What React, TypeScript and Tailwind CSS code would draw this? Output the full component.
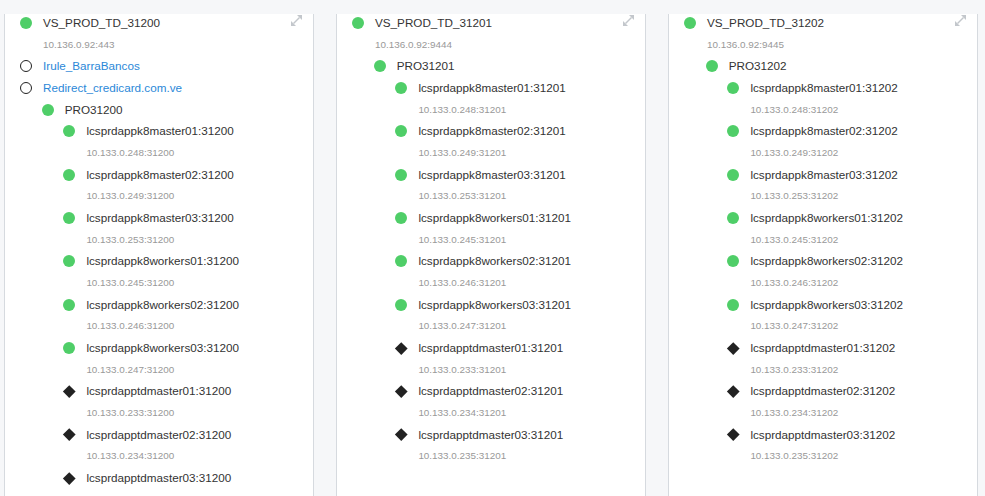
import React from "react";

type Kind = "ok" | "off" | "ext";
type Node = { name: string; ip?: string; kind: Kind; link?: boolean; children?: Node[] };

const hosts = [
  ["lcsprdappk8master01", "248", "ok"],
  ["lcsprdappk8master02", "249", "ok"],
  ["lcsprdappk8master03", "253", "ok"],
  ["lcsprdappk8workers01", "245", "ok"],
  ["lcsprdappk8workers02", "246", "ok"],
  ["lcsprdappk8workers03", "247", "ok"],
  ["lcsprdapptdmaster01", "233", "ext"],
  ["lcsprdapptdmaster02", "234", "ext"],
  ["lcsprdapptdmaster03", "235", "ext"],
] as const;

const members = (port: string): Node[] =>
  hosts.map(([h, o, k]) => ({ name: `${h}:${port}`, ip: `10.133.0.${o}:${port}`, kind: k as Kind }));

const trees: Node[] = [
  {
    name: "VS_PROD_TD_31200",
    ip: "10.136.0.92:443",
    kind: "ok",
    children: [
      { name: "Irule_BarraBancos", kind: "off", link: true },
      { name: "Redirect_credicard.com.ve", kind: "off", link: true },
      { name: "PRO31200", kind: "ok", children: members("31200") },
    ],
  },
  {
    name: "VS_PROD_TD_31201",
    ip: "10.136.0.92:9444",
    kind: "ok",
    children: [{ name: "PRO31201", kind: "ok", children: members("31201") }],
  },
  {
    name: "VS_PROD_TD_31202",
    ip: "10.136.0.92:9445",
    kind: "ok",
    children: [{ name: "PRO31202", kind: "ok", children: members("31202") }],
  },
];

function Icon({ kind }: { kind: Kind }) {
  if (kind === "ok") return <span className="block w-[12px] h-[12px] rounded-full bg-[#4fce68]" />;
  if (kind === "off")
    return <span className="block w-[12px] h-[12px] rounded-full border-[1.4px] border-[#222]" />;
  return (
    <span className="flex w-[12px] h-[12px] items-center justify-center">
      <span className="block w-[8.5px] h-[8.5px] bg-[#222] rotate-45" />
    </span>
  );
}

function Tree({ node }: { node: Node }) {
  return (
    <div>
      <div className="flex items-center h-[21.67px]">
        <Icon kind={node.kind} />
        <span
          className={`ml-[11px] text-[11.7px] leading-none whitespace-nowrap ${
            node.link ? "text-[#2b88d8]" : "text-[#333]"
          }`}
        >
          {node.name}
        </span>
      </div>
      {node.ip && (
        <div className="flex items-center h-[21.67px] pl-[23px] text-[9.9px] leading-none text-[#999] whitespace-nowrap">
          {node.ip}
        </div>
      )}
      {node.children && (
        <div>
          {node.children.map((c, i) => (
            <div key={i} className={c.link ? "" : "pl-[21.7px]"}>
              <Tree node={c} />
            </div>
          ))}
        </div>
      )}
    </div>
  );
}

function Expand() {
  return (
    <svg width="11" height="11" viewBox="0 0 11 11" className="absolute top-[1px] right-[11px]">
      <line x1="2.5" y1="8.5" x2="8.5" y2="2.5" stroke="#c3c7cc" strokeWidth="1.4" />
      <polygon points="11,0 11,5 6,0" fill="#c3c7cc" />
      <polygon points="0,11 0,6 5,11" fill="#c3c7cc" />
    </svg>
  );
}

export default function App() {
  return (
    <div
      className="w-[985px] h-[496px] overflow-hidden bg-[#f6f7f9] pl-[4px] pt-[14px] flex gap-[22px]"
      style={{ fontFamily: '"Liberation Sans", Arial, sans-serif' }}
    >
      {trees.map((t, i) => (
        <div
          key={i}
          className="relative w-[310px] h-[520px] shrink-0 bg-white border-x border-[#d6dadf] pl-[15px]"
        >
          <Expand />
          <div className="-mt-[1.8px]">
            <Tree node={t} />
          </div>
        </div>
      ))}
    </div>
  );
}
